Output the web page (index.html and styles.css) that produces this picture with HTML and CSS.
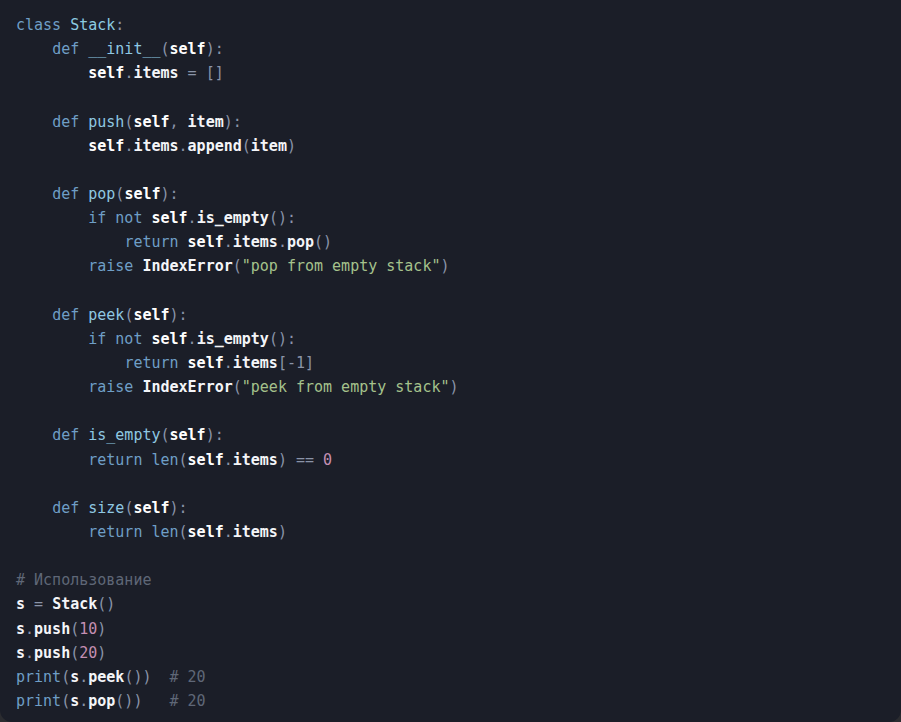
FILE: index.html
```html
<!DOCTYPE html>
<html lang="ru">
<head>
<meta charset="utf-8">
<title>Stack</title>
<link rel="stylesheet" href="styles.css">
</head>
<body>
<pre class="code"><code><span class="k">class</span> <span class="c">Stack</span><span class="p">:</span>
    <span class="k">def</span> <span class="f">__init__</span><span class="p">(</span><span class="s">self</span><span class="p">):</span>
        <span class="s">self</span><span class="p">.</span><span class="v">items</span> <span class="p">=</span> <span class="p">[]</span>

    <span class="k">def</span> <span class="f">push</span><span class="p">(</span><span class="s">self</span><span class="p">,</span> <span class="v">item</span><span class="p">):</span>
        <span class="s">self</span><span class="p">.</span><span class="v">items</span><span class="p">.</span><span class="v">append</span><span class="p">(</span><span class="v">item</span><span class="p">)</span>

    <span class="k">def</span> <span class="f">pop</span><span class="p">(</span><span class="s">self</span><span class="p">):</span>
        <span class="k">if</span> <span class="k">not</span> <span class="s">self</span><span class="p">.</span><span class="v">is_empty</span><span class="p">():</span>
            <span class="k">return</span> <span class="s">self</span><span class="p">.</span><span class="v">items</span><span class="p">.</span><span class="v">pop</span><span class="p">()</span>
        <span class="k">raise</span> <span class="v">IndexError</span><span class="p">(</span><span class="str">"pop from empty stack"</span><span class="p">)</span>

    <span class="k">def</span> <span class="f">peek</span><span class="p">(</span><span class="s">self</span><span class="p">):</span>
        <span class="k">if</span> <span class="k">not</span> <span class="s">self</span><span class="p">.</span><span class="v">is_empty</span><span class="p">():</span>
            <span class="k">return</span> <span class="s">self</span><span class="p">.</span><span class="v">items</span><span class="p">[-1]</span>
        <span class="k">raise</span> <span class="v">IndexError</span><span class="p">(</span><span class="str">"peek from empty stack"</span><span class="p">)</span>

    <span class="k">def</span> <span class="f">is_empty</span><span class="p">(</span><span class="s">self</span><span class="p">):</span>
        <span class="k">return</span> <span class="b">len</span><span class="p">(</span><span class="s">self</span><span class="p">.</span><span class="v">items</span><span class="p">)</span> <span class="p">==</span> <span class="n">0</span>

    <span class="k">def</span> <span class="f">size</span><span class="p">(</span><span class="s">self</span><span class="p">):</span>
        <span class="k">return</span> <span class="b">len</span><span class="p">(</span><span class="s">self</span><span class="p">.</span><span class="v">items</span><span class="p">)</span>

<span class="cm"># Использование</span>
<span class="v">s</span> <span class="p">=</span> <span class="v">Stack</span><span class="p">()</span>
<span class="v">s</span><span class="p">.</span><span class="v">push</span><span class="p">(</span><span class="n">10</span><span class="p">)</span>
<span class="v">s</span><span class="p">.</span><span class="v">push</span><span class="p">(</span><span class="n">20</span><span class="p">)</span>
<span class="b">print</span><span class="p">(</span><span class="v">s</span><span class="p">.</span><span class="v">peek</span><span class="p">())</span>  <span class="cm"># 20</span>
<span class="b">print</span><span class="p">(</span><span class="v">s</span><span class="p">.</span><span class="v">pop</span><span class="p">())</span>   <span class="cm"># 20</span></code></pre>
</body>
</html>
```
FILE: styles.css
```css
html, body {
  margin: 0;
  padding: 0;
  background: #2b2c30;
}

.code {
  margin: 0;
  box-sizing: border-box;
  width: 901px;
  height: 722px;
  padding: 13px 16px 9px 16px;
  background: #1b1e28;
  border-radius: 0 0 12px 12px;
  font-family: "DejaVu Sans Mono", "Liberation Mono", monospace;
  font-size: 15px;
  line-height: 24.14px;
  color: #e6e8ee;
  overflow: hidden;
}

.code code {
  font-family: inherit;
}

.k { color: #6f9ec6; }
.b { color: #6f9ec6; }
.c { color: #8ccbe0; }
.f { color: #8fc8e2; }
.s { color: #ffffff; font-weight: bold; }
.v { color: #f4f5f8; font-weight: bold; }
.p { color: #8a94a8; }
.str { color: #a5c28c; }
.n { color: #c48fb2; }
.cm { color: #5f6777; }
```
